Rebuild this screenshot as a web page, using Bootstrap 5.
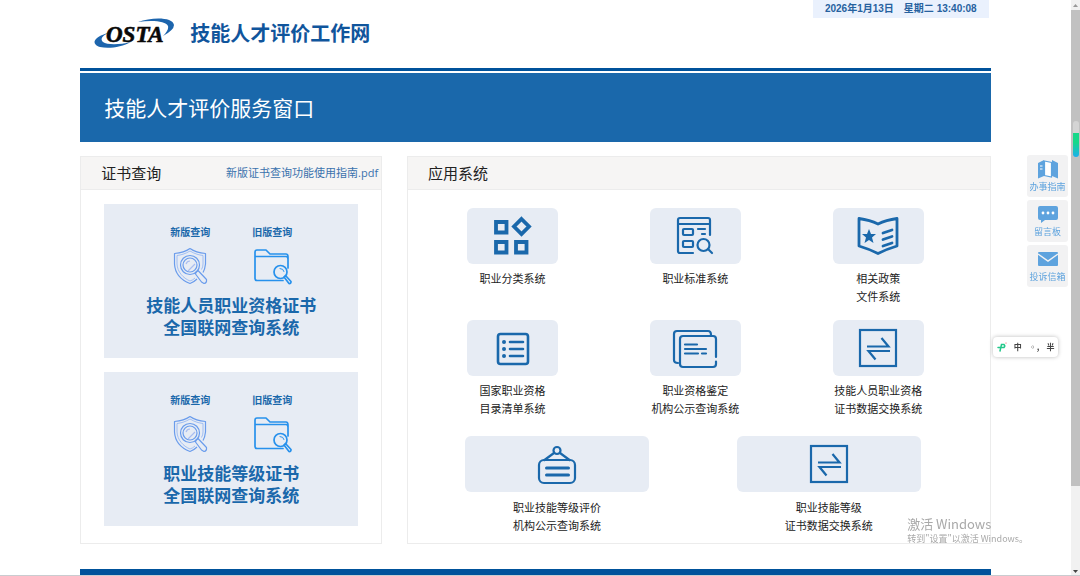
<!DOCTYPE html>
<html lang="zh-CN">
<head>
<meta charset="utf-8">
<meta name="viewport" content="width=device-width, initial-scale=1">
<title>技能人才评价工作网</title>
<link href="https://cdn.jsdelivr.net/npm/bootstrap@5.3.0/dist/css/bootstrap.min.css" rel="stylesheet">
<style>
:root{--brand:#1a68ab;--deep:#00529b;--tile:#e7ecf4}
body{font-family:"Noto Sans CJK SC",sans-serif;font-size:11px;line-height:18px;color:#222;background:#fff;padding-right:9px;overflow:hidden}
a{text-decoration:none}
.page-wrap{width:85%}
.masthead{height:68px}
.site-name{font-size:20px;line-height:28px;color:#10559c;font-weight:700}
.site-logo{width:82px;height:34px;margin-right:12px;overflow:visible}
.clock{font-family:"Liberation Sans","Noto Sans CJK SC",sans-serif;font-size:10px;line-height:18px;font-weight:700;color:#26619f;background:#eaf1fd;padding:0 12px;margin-right:2px;white-space:pre}
.rule-top{height:3px;background:var(--deep)}
.hero{background:var(--brand);color:#fff;font-size:21px;line-height:32px;padding:18px 24px 19px;margin-top:2px}
.panels{display:grid;grid-template-columns:302fr 584fr;column-gap:25px;margin-top:14px}
.panel{border:1px solid #ececec;min-height:388px}
.panel-head{background:#f6f5f4;border-bottom:1px solid #ececec;height:33px;padding:0 3px 0 20px}
.panel-head h2{font-size:15px;line-height:24px;color:#222;font-weight:400}
.guide{font-family:"Open Sans","Noto Sans CJK SC",sans-serif;color:#3a72ad}
.certs{padding:14px 23px 16px;gap:14px}
.cert{background:var(--tile);height:154px;padding-top:19px;color:var(--brand)}
.cert a{color:var(--brand)}
.mode{width:82px;font-size:10px;font-weight:700}
.mode svg{width:40px;height:38px;margin-top:6px}
.cert h3{font-family:"Liberation Sans","Noto Sans CJK SC",sans-serif;font-size:17px;line-height:22px;font-weight:700;margin-top:11px}
.apps{padding:18px 20px 0 13px}
.apps a,.apps-wide a{color:#222}
.apps a{min-height:98px;margin-bottom:14px}
.apps-wide{padding:4px 25px 9px 13px}
.app-icon{background:var(--tile);border-radius:6px;width:91px;height:56px;margin-bottom:5px;color:var(--brand)}
.app-icon svg{width:42px;height:42px}
.apps-wide .app-icon{width:184px;margin-bottom:6px}
.rule-end{height:7px;background:var(--deep);margin-top:25px}
.quick{right:12px;top:155px;gap:3px}
.quick a{width:41px;height:42px;background:#f2f2f3;color:#5ea3de;font-size:9px;line-height:12px;border-radius:3px}
.quick svg{width:22px;height:20px;margin-bottom:2px}
.ime{right:22px;top:337px;width:65px;height:20px;background:#fff;border-radius:4px;box-shadow:0 0 4px #bbb;font-size:8px;font-weight:700;line-height:18px;color:#444}
.ime svg{width:10px;height:10px}
.scroller{width:9px;background:#f1f1f1}
.scroller svg{width:9px;height:10px}
.scroll-thumb{background:#c1c1c1;flex:475 1 0}
.scroll-track{flex:80 1 0}
.meter{right:1px;top:121px;width:6px;height:36px;border-radius:3px;background:linear-gradient(#d4d4d4 33%,#18d88a 34%,#18d88a 60%,#1ab0ee)}
.notice{right:52px;bottom:30px;color:#a9a9a9;font-size:9px;line-height:14px;pointer-events:none}
.notice strong{font-size:13px;line-height:16px;font-weight:400}
.edge{height:1px;background:#c9ccd0}
</style>
</head>
<body>
<svg class="d-none" xmlns="http://www.w3.org/2000/svg">
  <symbol id="shield" viewBox="0 0 40 38"><g fill="none" stroke="#6a9cec" stroke-width="1.200" stroke-linejoin="round"><path d="M20 1.500C15 5 10 6 4.500 6.500V17C5 26 11 33 20 36.500C23 35.500 25 34 27 32M20 1.500C25 5 30 6 35.500 6.500V17Q35 22 33 25.500"/><path d="M20 4C15 7 11 8 7 8.500V17C7.500 25 13 31 20 34Q23 33 25 31M20 4C25 7 29 8 33 8.500V17Q33 20 31.500 22.500" stroke="#8fb3f2" stroke-width=".8"/><circle cx="20" cy="18" r="9.500"/><circle cx="20" cy="18" r="7"/><path d="M26 25L28 23.500L36.500 32.500Q37 36 34 36.500L31.500 35L25.500 27Z"/><path d="M16 17Q17 14 20 14M18 24L25 17" stroke="#a9bdf0"/></g></symbol>
  <symbol id="folder" viewBox="0 0 40 38"><g fill="none" stroke="#2791ec" stroke-width="1.700" stroke-linejoin="round" stroke-linecap="round"><path d="M31 33.500H5Q3 33.500 3 31.500V5Q3 3 5 3H14L18 7H34Q36 7 36 10V21M3 9.500H34Q36 9.500 36 12"/><circle cx="28.500" cy="25" r="6.500"/><path d="M32 30L33.500 28.500L39 34.500Q39 37 37 36.500Z"/><path d="M28 21.500Q31.500 21.500 32 24.500" stroke-width="1"/></g></symbol>
  <symbol id="swap" viewBox="0 0 42 42"><g fill="none" stroke="currentColor" stroke-width="2.200"><rect x="3" y="3" width="36" height="36"/><path d="M10 19.500H31.500L24.500 11M33 24H11.500L18.500 32.500"/></g></symbol>
</svg>

<div class="page-wrap mx-auto">
  <header class="masthead d-flex justify-content-between align-items-start">
    <a href="#" class="d-flex align-items-center ps-3 pt-3">
      <svg class="site-logo" viewBox="0 0 82 34" role="img" aria-label="OSTA">
        <path d="M42 6C56 1 77 1 78 9Q78 14 67 20Q73 14 72 10C70 5 56 4 42 6Z" fill="#1d65ad"/>
        <path d="M12 17C-3 21-5 28 4 31C13 33 26 31 35 26C23 29 11 29 7 26C4 23 6 20 12 17Z" fill="#1d65ad"/>
        <text x="10" y="26" font-family="Liberation Serif, serif" font-size="23" font-weight="700" font-style="italic" stroke="#080808" stroke-width=".6" fill="#080808">OSTA</text>
      </svg>
      <span class="site-name">技能人才评价工作网</span>
    </a>
    <time class="clock" datetime="2026-01-13T13:40:08">2026年1月13日　星期二 13:40:08</time>
  </header>
  <div class="rule-top"></div>
  <h1 class="hero mb-0 fw-normal">技能人才评价服务窗口</h1>

  <main class="panels">
    <section class="panel">
      <div class="panel-head d-flex align-items-center justify-content-between">
        <h2 class="mb-0">证书查询</h2>
        <a class="guide" href="#">新版证书查询功能使用指南.pdf</a>
      </div>
      <div class="certs d-flex flex-column">
        <article class="cert text-center">
          <div class="d-flex justify-content-center">
            <a class="mode" href="#">新版查询<br><svg><use href="#shield"/></svg></a>
            <a class="mode" href="#">旧版查询<br><svg><use href="#folder"/></svg></a>
          </div>
          <h3 class="mb-0">技能人员职业资格证书<br>全国联网查询系统</h3>
        </article>
        <article class="cert text-center">
          <div class="d-flex justify-content-center">
            <a class="mode" href="#">新版查询<br><svg><use href="#shield"/></svg></a>
            <a class="mode" href="#">旧版查询<br><svg><use href="#folder"/></svg></a>
          </div>
          <h3 class="mb-0">职业技能等级证书<br>全国联网查询系统</h3>
        </article>
      </div>
    </section>

    <section class="panel">
      <div class="panel-head d-flex align-items-center"><h2 class="mb-0">应用系统</h2></div>
      <div class="apps">
        <div class="row row-cols-3 g-0 text-center">
          <a class="col d-flex flex-column align-items-center" href="#"><span class="app-icon d-flex align-items-center justify-content-center"><svg viewBox="0 0 42 42" fill="none" stroke="currentColor" stroke-width="3.800"><path d="M4 7H14.500V17.500H4ZM4 27H14.500V37.500H4ZM24 27H34.500V37.500H24Z"/><path d="M29.500 4L37 11.500L29.500 19L22 11.500Z"/></svg></span>职业分类系统</a>
          <a class="col d-flex flex-column align-items-center" href="#"><span class="app-icon d-flex align-items-center justify-content-center"><svg viewBox="0 0 42 42" fill="none" stroke="currentColor" stroke-width="2.200" stroke-linejoin="round" stroke-linecap="round"><path d="M19 38H6Q4 38 4 36V5Q4 3 6 3H34Q36 3 36 5V20M4 9H36"/><rect x="9" y="14" width="10" height="6" rx="1"/><rect x="9" y="26" width="10" height="6" rx="1"/><path d="M24 14H31M28 19H31"/><circle cx="29.500" cy="30" r="6"/><path d="M34 34L38 38"/></svg></span>职业标准系统</a>
          <a class="col d-flex flex-column align-items-center" href="#"><span class="app-icon d-flex align-items-center justify-content-center"><svg viewBox="0 0 42 42" fill="none" stroke="currentColor" stroke-width="2.800" stroke-linejoin="round" stroke-linecap="round"><path d="M2 3.500Q13 5 21 9Q29 5 40 3.500V31Q30 34 21 38.500Q12 34 2 31Z"/><path d="M26 18L35 15M26 24.500L35 21.500M26 31L35 28"/><path d="M12 14L14 19L19 19L15 22.500L16.500 28L12 25L7.500 28L9 22.500L5 19L10 19Z" fill="currentColor" stroke="none"/></svg></span>相关政策<br>文件系统</a>
          <a class="col d-flex flex-column align-items-center" href="#"><span class="app-icon d-flex align-items-center justify-content-center"><svg viewBox="0 0 42 42" fill="none" stroke="currentColor" stroke-width="2.600" stroke-linecap="round"><rect x="6" y="7" width="30" height="30" rx="2.500"/><path d="M18 15H31M18 22H31M18 29H31"/><path d="M12 15H12.010M12 22H12.010M12 29H12.010" stroke-width="4"/></svg></span>国家职业资格<br>目录清单系统</a>
          <a class="col d-flex flex-column align-items-center" href="#"><span class="app-icon d-flex align-items-center justify-content-center"><svg viewBox="0 0 42 42" fill="none" stroke="currentColor" stroke-width="2.200" stroke-linecap="round" overflow="visible"><path d="M4 36Q0 36 0 33V7Q0 4 3 4H34Q37 4 37 8"/><path d="M42 30V12Q42 9 39 9H9Q6 9 6 12V37Q6 40 9 40H39Q42 40 42 37V34.500"/><path d="M11 17.500H23M11 22H32M11 26.500H24M28 26.500H32"/></svg></span>职业资格鉴定<br>机构公示查询系统</a>
          <a class="col d-flex flex-column align-items-center" href="#"><span class="app-icon d-flex align-items-center justify-content-center"><svg><use href="#swap"/></svg></span>技能人员职业资格<br>证书数据交换系统</a>
        </div>
      </div>
      <div class="apps-wide">
        <div class="row row-cols-2 g-0 text-center">
          <a class="col d-flex flex-column align-items-center" href="#"><span class="app-icon d-flex align-items-center justify-content-center"><svg viewBox="0 0 42 42" fill="none" stroke="currentColor" stroke-width="2.200" stroke-linecap="round"><rect x="3" y="17" width="36" height="23" rx="5"/><circle cx="21" cy="7.500" r="3.500"/><path d="M18 10L8.500 17M24 10L33.500 17"/><path d="M10.500 25H32.500M10.500 32H32.500" stroke-width="3"/></svg></span>职业技能等级评价<br>机构公示查询系统</a>
          <a class="col d-flex flex-column align-items-center" href="#"><span class="app-icon d-flex align-items-center justify-content-center"><svg><use href="#swap"/></svg></span>职业技能等级<br>证书数据交换系统</a>
        </div>
      </div>
    </section>
  </main>
  <footer class="rule-end"></footer>
</div>

<nav class="quick position-fixed d-flex flex-column" aria-label="快捷入口">
  <a class="d-flex flex-column align-items-center justify-content-center" href="#"><svg viewBox="0 0 22 20" fill="currentColor"><path d="M1 4L7 1V17L1 19.500ZM15 1L21 4V19.500L15 17Z"/><path d="M7.500 2L14.500 3.500V18L7.500 16.500Z" fill="#fff" stroke="currentColor" stroke-width="1.200"/><path d="M3 7H5.500M3 10H5.500" stroke="#fff"/></svg>办事指南</a>
  <a class="d-flex flex-column align-items-center justify-content-center" href="#"><svg viewBox="0 0 22 20"><path d="M3 2H19Q21 2 21 4V14Q21 16 19 16H8L4 19V16H3Q1 16 1 14V4Q1 2 3 2Z" fill="currentColor"/><g fill="#fff"><circle cx="6" cy="9" r="1.400"/><circle cx="11" cy="9" r="1.400"/><circle cx="16" cy="9" r="1.400"/></g></svg>留言板</a>
  <a class="d-flex flex-column align-items-center justify-content-center" href="#"><svg viewBox="0 0 22 20"><rect x="1" y="3" width="20" height="14" rx="1" fill="currentColor"/><path d="M1 5L11 12L21 5" fill="none" stroke="#f2f2f3" stroke-width="1.500"/></svg>投诉信箱</a>
</nav>

<div class="ime position-fixed d-flex align-items-center justify-content-around">
  <svg viewBox="0 0 10 10" fill="none" stroke="#23c78a" stroke-width="1.500" stroke-linecap="round"><path d="M1 5.500H7Q8.500 4 7 2.500H4.500L3 9"/><circle cx="9" cy="1" r=".6" fill="#e44" stroke="none"/></svg>
  <span>中</span><span>◦,</span><span>半</span>
</div>

<div class="notice position-fixed"><strong class="d-block">激活 Windows</strong>转到"设置"以激活 Windows。</div>

<div class="scroller position-fixed top-0 bottom-0 end-0 d-flex flex-column" aria-hidden="true">
  <svg viewBox="0 0 9 10"><path d="M2 7L4.500 4L7 7Z" fill="#999"/></svg>
  <div class="scroll-thumb"></div>
  <div class="scroll-track"></div>
  <svg viewBox="0 0 9 10"><path d="M2 4L4.500 7L7 4Z" fill="#444"/></svg>
  <div class="meter position-absolute"></div>
</div>
<div class="edge position-fixed start-0 end-0 bottom-0"></div>
<script src="https://cdn.jsdelivr.net/npm/bootstrap@5.3.0/dist/js/bootstrap.bundle.min.js"></script>
</body>
</html>
